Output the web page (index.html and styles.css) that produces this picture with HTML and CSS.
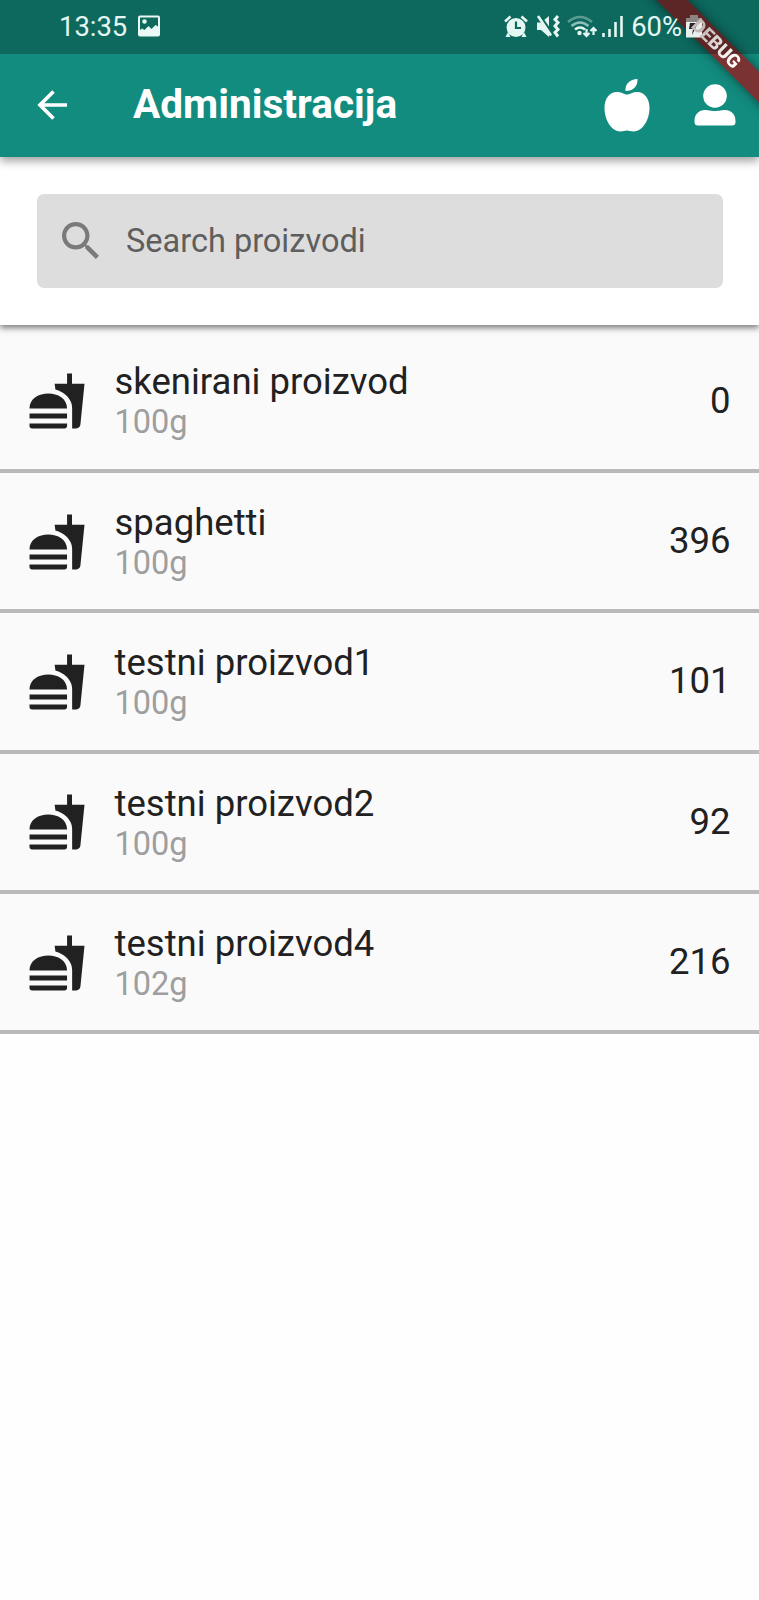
FILE: index.html
```html
<!DOCTYPE html>
<html lang="hr">
<head>
<meta charset="utf-8">
<title>Administracija</title>
<link rel="stylesheet" href="styles.css">
</head>
<body>
<svg class="defs" width="0" height="0">
  <symbol id="fastfood" viewBox="0 0 24 24"><path d="M18.060 22.990h1.660c.84 0 1.530-.64 1.630-1.460L23 5.050h-5V1h-1.970v4.050h-4.970l.3 2.340c1.710.47 3.310 1.320 4.270 2.260 1.440 1.420 2.430 2.890 2.430 5.290v8.050zM1 21.990V21h15.030v.99c0 .55-.45 1-1.010 1H2.010c-.56 0-1.010-.45-1.010-1zm15.030-7c0-8-15.030-8-15.030 0h15.030zM1.020 17h15v2h-15z"/></symbol>
</svg>
<header class="top">
  <div class="status">
    <span class="clock">13:35</span>
    <svg class="pic" viewBox="0 0 22 22"><rect width="22" height="21" y=".5" rx="2" fill="#e9faf6"/><path d="M2 2.500h18v9l-2.500-1.500-4 4-3-3-4 4-2.500-1.500-2 1.500z" fill="#0e695d"/><circle cx="6.500" cy="6.500" r="2.200" fill="#e9faf6"/></svg>
    <span class="spacer"></span>
    <svg class="tray" viewBox="0 0 120 24">
      <g fill="#e4f7f2"><circle cx="12" cy="12.500" r="9.500"/><path d="M4 17l-2.500 5h5zM20 17l2.500 5h-5z"/></g>
      <path d="M1 6.500l5.500-5M23 6.500l-5.500-5" stroke="#e4f7f2" stroke-width="2.600" fill="none"/>
      <path d="M12 6.500v6.500h5" stroke="#0e695d" stroke-width="2.200" fill="none"/>
      <path d="M33 7.500h4l8-6.500v21l-8-7h-4z" fill="#e4f7f2"/>
      <path d="M35 .500l13 19" stroke="#0e695d" stroke-width="4"/><path d="M34 1l13 19.500" stroke="#e4f7f2" stroke-width="2.600"/>
      <path d="M54 1l-3 3.500 3 3-3 3.500 3 3.500-3 3 3 4" fill="none" stroke="#e4f7f2" stroke-width="3"/>
      <g fill="none" stroke-width="2.600"><path d="M64 7q12-10 24 0" stroke="#5d9c92"/><path d="M67.500 11q8.500-7 17 0" stroke="#8fc0b7"/><path d="M71 14.500q5-4 10 0" stroke="#e4f7f2"/></g>
      <circle cx="75.500" cy="18" r="2.200" fill="#e4f7f2"/>
      <path d="M82.500 14v7M79.500 18l3 3 3-3M89.500 20v-7M86.500 16l3-3 3 3" fill="none" stroke="#e4f7f2" stroke-width="2.200"/>
      <path d="M99.500 22v-4M105.500 22v-8M111.500 22V7M117.500 22V1" stroke="#e4f7f2" stroke-width="2.600"/>
    </svg>
    <span class="pct">60%</span>
    <svg class="battery" viewBox="0 0 16 23"><path d="M4 0h8v3h4v4H0V3h4z" fill="#8d8583"/><path d="M0 7h16v15.500H0z" fill="#e9efed"/><path d="M4 8h8L6 20l1-6H3z" fill="#222"/></svg>
  </div>
  <div class="bar">
    <svg class="back" viewBox="0 0 30 30"><path d="M30 15H3M16.500 1.500L3 15l13.500 13.500" fill="none" stroke="#fff" stroke-width="3.700"/></svg>
    <h1>Administracija</h1>
    <svg class="apple" viewBox="0 0 46 53"><path d="M23 15.500c3 0 5-2.500 10-2.500 8 0 12.500 7 12.500 16 0 12-7 23.500-16 23.500-3 0-4-1-6.500-1s-3.500 1-6.500 1C7.500 52.500.500 41 .500 29c0-9 4.500-16 12.500-16 5 0 7 2.500 10 2.500zM21.500 12C21 4.500 26 .500 33.500 0 34 7.500 29 12 21.500 12z" fill="#fff"/></svg>
    <svg class="person" viewBox="0 0 42 42"><circle cx="21" cy="12" r="11.800" fill="#fff"/><path d="M.500 38V37C.500 30 5 26 11 26c3 0 5 1 10 1s7-1 10-1c6 0 10.500 4 10.500 11v1q0 3.500-3.500 3.500H4Q.500 41.500.500 38z" fill="#fff"/></svg>
  </div>
  <div class="ribbon"><span class="band"></span></div>
  <div class="ribbon label"><span class="band">DEBUG</span></div>
</header>
<section class="search">
  <div class="field">
    <svg viewBox="3 3 17.490 17.490"><path fill="#7a7a7a" d="M15.500 14h-.79l-.28-.27C15.410 12.590 16 11.110 16 9.500 16 5.910 13.090 3 9.500 3S3 5.910 3 9.500 5.910 16 9.500 16c1.610 0 3.090-.59 4.230-1.570l.27.28v.79l5 4.990L20.490 19l-4.990-5zm-6 0C7.010 14 5 11.990 5 9.500S7.010 5 9.500 5 14 7.010 14 9.500 11.990 14 9.500 14z"/></svg>
    <span>Search proizvodi</span>
  </div>
</section>
<main class="list">
  <div class="row"><svg><use href="#fastfood"/></svg><div class="info"><b>skenirani proizvod</b><small>100g</small></div><span>0</span></div>
  <div class="row"><svg><use href="#fastfood"/></svg><div class="info"><b>spaghetti</b><small>100g</small></div><span>396</span></div>
  <div class="row"><svg><use href="#fastfood"/></svg><div class="info"><b>testni proizvod1</b><small>100g</small></div><span>101</span></div>
  <div class="row"><svg><use href="#fastfood"/></svg><div class="info"><b>testni proizvod2</b><small>100g</small></div><span>92</span></div>
  <div class="row"><svg><use href="#fastfood"/></svg><div class="info"><b>testni proizvod4</b><small>102g</small></div><span>216</span></div>
</main>
</body>
</html>
```

FILE: styles.css
```css
* { box-sizing: border-box; }
body { margin: 0; height: 1600px; overflow: hidden; background: #fefefe; font-family: Roboto, sans-serif; color: #212121; }
svg { display: block; flex: none; }
.defs { position: absolute; }
.top { position: relative; z-index: 2; height: 157px; background: #128c7e; box-shadow: 0 4px 9px rgba(0,0,0,.38); }
.status { position: relative; z-index: 3; display: flex; height: 53.500px; align-items: center; padding: 1px 57px 0 59px; color: #e4f7f2; font-size: 27.400px; background: rgba(0,0,0,.25); }
.pic { width: 22px; height: 22px; margin: -2px 0 0 11px; }
.spacer { flex: 1; }
.tray { width: 120px; height: 24px; margin-top: -1px; }
.pct { margin-left: 7px; }
.battery { width: 16px; height: 23px; margin: -2px 0 0 4px; }
.bar { display: flex; align-items: center; height: 103.500px; padding: 0 23px 0 36.500px; }
.back { width: 30px; height: 30px; }
h1 { flex: 1; margin: -2px 0 0 66.500px; color: #fff; font-size: 40.600px; line-height: 48px; font-weight: 700; }
.apple { width: 46px; height: 53px; margin: 1px 44.500px 0 0; }
.person { width: 42px; height: 42px; margin-top: -1px; }
.ribbon { position: absolute; z-index: 2; top: 0; right: 0; width: 180px; height: 157px; overflow: hidden; pointer-events: none; }
.band { position: absolute; left: 36.500px; top: 32.500px; width: 200px; height: 22px; line-height: 22px; text-align: center; transform: rotate(45deg); background: rgba(130,44,44,.93); box-shadow: 0 0 11px rgba(0,0,0,.5); color: #fff; font-size: 19px; font-weight: 900; }
.label { z-index: 4; }
.label .band { box-shadow: none; color: transparent; background: linear-gradient(90deg, #c4b9b7 40%, #fff 62%); background-clip: text; -webkit-background-clip: text; }
.search { position: relative; z-index: 1; height: 168px; padding: 37px 36.500px 37px 37px; background: #fff; box-shadow: 0 3px 6px rgba(0,0,0,.5); }
.field { display: flex; align-items: center; height: 94px; padding-left: 25px; border-radius: 7px; background: #ddd; color: #5e5e5e; font-size: 32.500px; }
.field svg { width: 37px; height: 37px; margin: -2px 27px 0 0; }
.list { padding-top: 7.500px; background: #fafafa; }
.row { display: flex; align-items: center; height: 140.400px; padding: 0 28.500px 0 29px; border-bottom: 4px solid #b9b9b9; }
.row > svg { width: 60px; height: 60px; margin: 1px 0 0 -2.500px; fill: #212121; }
.info { flex: 1; display: flex; flex-direction: column; margin-left: 28px; padding-top: 1.500px; }
.info b { font-size: 36.500px; line-height: 42px; font-weight: 400; }
.info small { font-size: 32.500px; line-height: 38px; color: #9e9e9e; }
.row > span { margin-top: -1px; font-size: 36.500px; }
```
